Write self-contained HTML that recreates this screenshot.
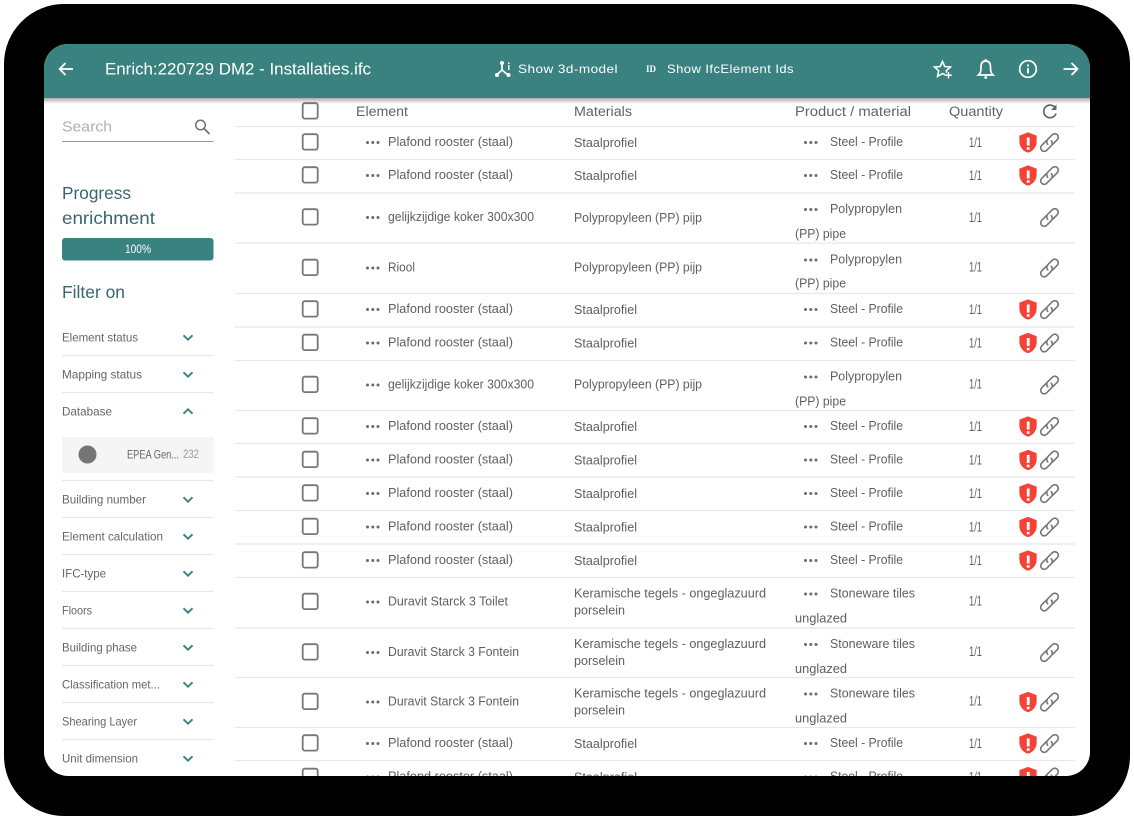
<!DOCTYPE html>
<html><head><meta charset="utf-8"><style>
html,body{margin:0;padding:0;background:#fff;width:1134px;height:820px;overflow:hidden}
svg{display:block}
text{font-family:"Liberation Sans",sans-serif}
.t{font-size:12.5px;fill:#5f5f5f}
text[x="969"]{font-size:13.5px}
.h{font-size:13.5px;fill:#626262}
.f{font-size:12px;fill:#666}
.w{fill:#fff}
.p{font-size:17.5px;fill:#36666f}
</style></head><body>
<svg width="1134" height="820" viewBox="0 0 1134 820" xmlns="http://www.w3.org/2000/svg">
<defs>
<clipPath id="scr"><rect x="44" y="44" width="1046" height="732" rx="24"/></clipPath>
<linearGradient id="sh" x1="0" y1="0" x2="0" y2="1"><stop offset="0" stop-color="#000" stop-opacity=".32"/><stop offset="1" stop-color="#000" stop-opacity="0"/></linearGradient>
<g id="cb"><rect x="302.700" y="-7.800" width="15" height="15.400" rx="2" fill="#fff" stroke="#777" stroke-width="1.800"/></g>
<g id="d1" fill="#6a6a6a"><circle cx="367.500" cy="0.500" r="1.500"/><circle cx="372.800" cy="0.500" r="1.500"/><circle cx="378" cy="0.500" r="1.500"/></g>
<g id="d2" fill="#6a6a6a"><circle cx="805.500" cy="0.500" r="1.500"/><circle cx="810.800" cy="0.500" r="1.500"/><circle cx="816" cy="0.500" r="1.500"/></g>
<g id="lk"><path transform="translate(1049.500,0.500) rotate(-45)" fill="none" stroke="#757575" stroke-width="1.600" stroke-linecap="round" d="M-1 -3.500H-7.500A3.500 3.500 0 0 0 -7.500 3.500H-1A3.500 3.500 0 0 0 2.500 0M1 3.500H7.500A3.500 3.500 0 0 0 7.500 -3.500H1A3.500 3.500 0 0 0 -2.500 0"/></g>
<g id="sd"><path transform="translate(1016.500,-10.500) scale(.96,.92)" fill="#f44336" d="M12 1L3 4.500v6.500c0 5.550 3.840 10.740 9 12 5.160-1.260 9-6.450 9-12V4.500l-9-3.500z"/><path fill="#fff" d="M1026.800 -4.500h2.800v8h-2.800zm0 9.700h2.800v2.600h-2.800z"/></g>
<path id="ch" d="M-4.500 -2.200L0 2.200L4.500 -2.200" fill="none" stroke="#3a8280" stroke-width="1.900"/>
</defs>

<rect width="1134" height="820" fill="#fff"/>
<rect x="4" y="4" width="1126" height="812" rx="60" fill="#000"/>
<g clip-path="url(#scr)">
<rect x="44" y="44" width="1046" height="732" fill="#fff"/>

<!-- table lines -->
<g stroke="#e8e8e8" stroke-width="1.200">
<path d="M235 126.500H1075M235 159.500H1075M235 193H1075M235 243H1075M235 293.500H1075M235 327H1075M235 360.500H1075M235 410.500H1075M235 443.500H1075M235 477H1075M235 510.500H1075M235 544H1075M235 577.500H1075M235 628H1075M235 677.500H1075M235 727.500H1075M235 760.500H1075"/>
</g>

<!-- table head -->
<use href="#cb" y="111"/>
<text class="h" x="356" y="116" textLength="52" lengthAdjust="spacingAndGlyphs">Element</text>
<text class="h" x="574" y="116" textLength="58" lengthAdjust="spacingAndGlyphs">Materials</text>
<text class="h" x="795" y="116" textLength="116" lengthAdjust="spacingAndGlyphs">Product / material</text>
<text class="h" x="949" y="116" textLength="54" lengthAdjust="spacingAndGlyphs">Quantity</text>
<path d="M1055 107.500A6.300 6.300 0 1 0 1056 113.500" fill="none" stroke="#666" stroke-width="1.700"/><path d="M1056.500 104.500V110H1051Z" fill="#666"/>

<!-- rows -->
<g transform="translate(0,142)"><use href="#cb"/><use href="#d1"/><text class="t" x="388" y="4" textLength="125" lengthAdjust="spacingAndGlyphs">Plafond rooster (staal)</text><text class="t" x="574" y="5" textLength="63" lengthAdjust="spacingAndGlyphs">Staalprofiel</text><use href="#d2"/><text class="t" x="830" y="4" textLength="73" lengthAdjust="spacingAndGlyphs">Steel - Profile</text><text class="t" x="969" y="5" textLength="13" lengthAdjust="spacingAndGlyphs">1/1</text><use href="#sd"/><use href="#lk"/></g>
<g transform="translate(0,175)"><use href="#cb"/><use href="#d1"/><text class="t" x="388" y="4" textLength="125" lengthAdjust="spacingAndGlyphs">Plafond rooster (staal)</text><text class="t" x="574" y="5" textLength="63" lengthAdjust="spacingAndGlyphs">Staalprofiel</text><use href="#d2"/><text class="t" x="830" y="4" textLength="73" lengthAdjust="spacingAndGlyphs">Steel - Profile</text><text class="t" x="969" y="5" textLength="13" lengthAdjust="spacingAndGlyphs">1/1</text><use href="#sd"/><use href="#lk"/></g>

<g transform="translate(0,217)"><use href="#cb"/><use href="#d1"/><text class="t" x="388" y="4" textLength="146" lengthAdjust="spacingAndGlyphs">gelijkzijdige koker 300x300</text><text class="t" x="574" y="5" textLength="128" lengthAdjust="spacingAndGlyphs">Polypropyleen (PP) pijp</text><use href="#d2" y="-8"/><text class="t" x="830" y="-4" textLength="72" lengthAdjust="spacingAndGlyphs">Polypropylen</text><text class="t" x="795" y="21" textLength="51" lengthAdjust="spacingAndGlyphs">(PP) pipe</text><text class="t" x="969" y="5" textLength="13" lengthAdjust="spacingAndGlyphs">1/1</text><use href="#lk"/></g>
<g transform="translate(0,267.500)"><use href="#cb"/><use href="#d1"/><text class="t" x="388" y="4" textLength="27" lengthAdjust="spacingAndGlyphs">Riool</text><text class="t" x="574" y="4" textLength="128" lengthAdjust="spacingAndGlyphs">Polypropyleen (PP) pijp</text><use href="#d2" y="-8"/><text class="t" x="830" y="-4" textLength="72" lengthAdjust="spacingAndGlyphs">Polypropylen</text><text class="t" x="795" y="20" textLength="51" lengthAdjust="spacingAndGlyphs">(PP) pipe</text><text class="t" x="969" y="4" textLength="13" lengthAdjust="spacingAndGlyphs">1/1</text><use href="#lk"/></g>

<g transform="translate(0,309)"><use href="#cb"/><use href="#d1"/><text class="t" x="388" y="4" textLength="125" lengthAdjust="spacingAndGlyphs">Plafond rooster (staal)</text><text class="t" x="574" y="5" textLength="63" lengthAdjust="spacingAndGlyphs">Staalprofiel</text><use href="#d2"/><text class="t" x="830" y="4" textLength="73" lengthAdjust="spacingAndGlyphs">Steel - Profile</text><text class="t" x="969" y="5" textLength="13" lengthAdjust="spacingAndGlyphs">1/1</text><use href="#sd"/><use href="#lk"/></g>
<g transform="translate(0,342.500)"><use href="#cb"/><use href="#d1"/><text class="t" x="388" y="4" textLength="125" lengthAdjust="spacingAndGlyphs">Plafond rooster (staal)</text><text class="t" x="574" y="5" textLength="63" lengthAdjust="spacingAndGlyphs">Staalprofiel</text><use href="#d2"/><text class="t" x="830" y="4" textLength="73" lengthAdjust="spacingAndGlyphs">Steel - Profile</text><text class="t" x="969" y="5" textLength="13" lengthAdjust="spacingAndGlyphs">1/1</text><use href="#sd"/><use href="#lk"/></g>

<g transform="translate(0,384.500)"><use href="#cb"/><use href="#d1"/><text class="t" x="388" y="4" textLength="146" lengthAdjust="spacingAndGlyphs">gelijkzijdige koker 300x300</text><text class="t" x="574" y="4" textLength="128" lengthAdjust="spacingAndGlyphs">Polypropyleen (PP) pijp</text><use href="#d2" y="-8"/><text class="t" x="830" y="-4" textLength="72" lengthAdjust="spacingAndGlyphs">Polypropylen</text><text class="t" x="795" y="21" textLength="51" lengthAdjust="spacingAndGlyphs">(PP) pipe</text><text class="t" x="969" y="4" textLength="13" lengthAdjust="spacingAndGlyphs">1/1</text><use href="#lk"/></g>

<g transform="translate(0,426)"><use href="#cb"/><use href="#d1"/><text class="t" x="388" y="4" textLength="125" lengthAdjust="spacingAndGlyphs">Plafond rooster (staal)</text><text class="t" x="574" y="5" textLength="63" lengthAdjust="spacingAndGlyphs">Staalprofiel</text><use href="#d2"/><text class="t" x="830" y="4" textLength="73" lengthAdjust="spacingAndGlyphs">Steel - Profile</text><text class="t" x="969" y="5" textLength="13" lengthAdjust="spacingAndGlyphs">1/1</text><use href="#sd"/><use href="#lk"/></g>
<g transform="translate(0,459.500)"><use href="#cb"/><use href="#d1"/><text class="t" x="388" y="4" textLength="125" lengthAdjust="spacingAndGlyphs">Plafond rooster (staal)</text><text class="t" x="574" y="5" textLength="63" lengthAdjust="spacingAndGlyphs">Staalprofiel</text><use href="#d2"/><text class="t" x="830" y="4" textLength="73" lengthAdjust="spacingAndGlyphs">Steel - Profile</text><text class="t" x="969" y="5" textLength="13" lengthAdjust="spacingAndGlyphs">1/1</text><use href="#sd"/><use href="#lk"/></g>
<g transform="translate(0,493)"><use href="#cb"/><use href="#d1"/><text class="t" x="388" y="4" textLength="125" lengthAdjust="spacingAndGlyphs">Plafond rooster (staal)</text><text class="t" x="574" y="5" textLength="63" lengthAdjust="spacingAndGlyphs">Staalprofiel</text><use href="#d2"/><text class="t" x="830" y="4" textLength="73" lengthAdjust="spacingAndGlyphs">Steel - Profile</text><text class="t" x="969" y="5" textLength="13" lengthAdjust="spacingAndGlyphs">1/1</text><use href="#sd"/><use href="#lk"/></g>
<g transform="translate(0,526.500)"><use href="#cb"/><use href="#d1"/><text class="t" x="388" y="4" textLength="125" lengthAdjust="spacingAndGlyphs">Plafond rooster (staal)</text><text class="t" x="574" y="5" textLength="63" lengthAdjust="spacingAndGlyphs">Staalprofiel</text><use href="#d2"/><text class="t" x="830" y="4" textLength="73" lengthAdjust="spacingAndGlyphs">Steel - Profile</text><text class="t" x="969" y="5" textLength="13" lengthAdjust="spacingAndGlyphs">1/1</text><use href="#sd"/><use href="#lk"/></g>
<g transform="translate(0,560)"><use href="#cb"/><use href="#d1"/><text class="t" x="388" y="4" textLength="125" lengthAdjust="spacingAndGlyphs">Plafond rooster (staal)</text><text class="t" x="574" y="5" textLength="63" lengthAdjust="spacingAndGlyphs">Staalprofiel</text><use href="#d2"/><text class="t" x="830" y="4" textLength="73" lengthAdjust="spacingAndGlyphs">Steel - Profile</text><text class="t" x="969" y="5" textLength="13" lengthAdjust="spacingAndGlyphs">1/1</text><use href="#sd"/><use href="#lk"/></g>

<g transform="translate(0,601.500)"><use href="#cb"/><use href="#d1"/><text class="t" x="388" y="4" textLength="120" lengthAdjust="spacingAndGlyphs">Duravit Starck 3 Toilet</text><text class="t" x="574" y="-4" textLength="192" lengthAdjust="spacingAndGlyphs">Keramische tegels - ongeglazuurd</text><text class="t" x="574" y="13" textLength="51" lengthAdjust="spacingAndGlyphs">porselein</text><use href="#d2" y="-8"/><text class="t" x="830" y="-4" textLength="85" lengthAdjust="spacingAndGlyphs">Stoneware tiles</text><text class="t" x="795" y="21" textLength="52" lengthAdjust="spacingAndGlyphs">unglazed</text><text class="t" x="969" y="4" textLength="13" lengthAdjust="spacingAndGlyphs">1/1</text><use href="#lk"/></g>
<g transform="translate(0,652)"><use href="#cb"/><use href="#d1"/><text class="t" x="388" y="4" textLength="131" lengthAdjust="spacingAndGlyphs">Duravit Starck 3 Fontein</text><text class="t" x="574" y="-4" textLength="192" lengthAdjust="spacingAndGlyphs">Keramische tegels - ongeglazuurd</text><text class="t" x="574" y="13" textLength="51" lengthAdjust="spacingAndGlyphs">porselein</text><use href="#d2" y="-8"/><text class="t" x="830" y="-4" textLength="85" lengthAdjust="spacingAndGlyphs">Stoneware tiles</text><text class="t" x="795" y="21" textLength="52" lengthAdjust="spacingAndGlyphs">unglazed</text><text class="t" x="969" y="4" textLength="13" lengthAdjust="spacingAndGlyphs">1/1</text><use href="#lk"/></g>
<g transform="translate(0,701.500)"><use href="#cb"/><use href="#d1"/><text class="t" x="388" y="4" textLength="131" lengthAdjust="spacingAndGlyphs">Duravit Starck 3 Fontein</text><text class="t" x="574" y="-4" textLength="192" lengthAdjust="spacingAndGlyphs">Keramische tegels - ongeglazuurd</text><text class="t" x="574" y="13" textLength="51" lengthAdjust="spacingAndGlyphs">porselein</text><use href="#d2" y="-8"/><text class="t" x="830" y="-4" textLength="85" lengthAdjust="spacingAndGlyphs">Stoneware tiles</text><text class="t" x="795" y="21" textLength="52" lengthAdjust="spacingAndGlyphs">unglazed</text><text class="t" x="969" y="4" textLength="13" lengthAdjust="spacingAndGlyphs">1/1</text><use href="#sd"/><use href="#lk"/></g>

<g transform="translate(0,743)"><use href="#cb"/><use href="#d1"/><text class="t" x="388" y="4" textLength="125" lengthAdjust="spacingAndGlyphs">Plafond rooster (staal)</text><text class="t" x="574" y="5" textLength="63" lengthAdjust="spacingAndGlyphs">Staalprofiel</text><use href="#d2"/><text class="t" x="830" y="4" textLength="73" lengthAdjust="spacingAndGlyphs">Steel - Profile</text><text class="t" x="969" y="5" textLength="13" lengthAdjust="spacingAndGlyphs">1/1</text><use href="#sd"/><use href="#lk"/></g>
<g transform="translate(0,776.500)"><use href="#cb"/><use href="#d1"/><text class="t" x="388" y="4" textLength="125" lengthAdjust="spacingAndGlyphs">Plafond rooster (staal)</text><text class="t" x="574" y="5" textLength="63" lengthAdjust="spacingAndGlyphs">Staalprofiel</text><use href="#d2"/><text class="t" x="830" y="4" textLength="73" lengthAdjust="spacingAndGlyphs">Steel - Profile</text><text class="t" x="969" y="5" textLength="13" lengthAdjust="spacingAndGlyphs">1/1</text><use href="#sd"/><use href="#lk"/></g>

<!-- sidebar -->
<text x="62" y="131.500" font-size="15" fill="#b0b0b0" textLength="50" lengthAdjust="spacingAndGlyphs">Search</text>
<circle cx="200.500" cy="125" r="4.800" fill="none" stroke="#707070" stroke-width="1.500"/><path d="M204 128.500L209.500 134" stroke="#707070" stroke-width="1.700"/>
<path d="M62 141.500H213.500" stroke="#9a9a9a" stroke-width="1.100"/>
<text class="p" x="62" y="199" textLength="69" lengthAdjust="spacingAndGlyphs">Progress</text>
<text class="p" x="62" y="224" textLength="93" lengthAdjust="spacingAndGlyphs">enrichment</text>
<rect x="62" y="238" width="151.500" height="22.500" rx="3" fill="#3a8280"/>
<text x="125" y="253" font-size="12" fill="#fff" textLength="26" lengthAdjust="spacingAndGlyphs">100%</text>
<text class="p" x="62" y="298" textLength="63" lengthAdjust="spacingAndGlyphs">Filter on</text>

<g stroke="#e8e8e8" stroke-width="1.200"><path d="M62 355.500H213.500M62 392.500H213.500M62 480.500H213.500M62 517.500H213.500M62 554.500H213.500M62 591.500H213.500M62 628.500H213.500M62 665.500H213.500M62 702.500H213.500M62 739.500H213.500"/></g>

<text class="f" x="62" y="341.500" textLength="76" lengthAdjust="spacingAndGlyphs">Element status</text><use href="#ch" x="188" y="337.500"/>
<text class="f" x="62" y="378.500" textLength="80" lengthAdjust="spacingAndGlyphs">Mapping status</text><use href="#ch" x="188" y="374.500"/>
<text class="f" x="62" y="415.500" textLength="50" lengthAdjust="spacingAndGlyphs">Database</text><path d="M183.500 413.700L188 409.300L192.500 413.700" fill="none" stroke="#3a8280" stroke-width="1.900"/>
<rect x="62" y="437" width="151.500" height="36" fill="#f5f5f5"/>
<circle cx="87.500" cy="454.500" r="9" fill="#757575"/>
<text class="f" x="127" y="458.500" textLength="52" lengthAdjust="spacingAndGlyphs">EPEA Gen...</text>
<text x="183" y="458" font-size="11.500" fill="#9a9a9a" textLength="16" lengthAdjust="spacingAndGlyphs">232</text>
<text class="f" x="62" y="503.500" textLength="84" lengthAdjust="spacingAndGlyphs">Building number</text><use href="#ch" x="188" y="499.500"/>
<text class="f" x="62" y="540.500" textLength="101" lengthAdjust="spacingAndGlyphs">Element calculation</text><use href="#ch" x="188" y="536.500"/>
<text class="f" x="62" y="577.500" textLength="44" lengthAdjust="spacingAndGlyphs">IFC-type</text><use href="#ch" x="188" y="573.500"/>
<text class="f" x="62" y="614.500" textLength="30" lengthAdjust="spacingAndGlyphs">Floors</text><use href="#ch" x="188" y="610.500"/>
<text class="f" x="62" y="651.500" textLength="75" lengthAdjust="spacingAndGlyphs">Building phase</text><use href="#ch" x="188" y="647.500"/>
<text class="f" x="62" y="688.500" textLength="98" lengthAdjust="spacingAndGlyphs">Classification met...</text><use href="#ch" x="188" y="684.500"/>
<text class="f" x="62" y="725.500" textLength="75" lengthAdjust="spacingAndGlyphs">Shearing Layer</text><use href="#ch" x="188" y="721.500"/>
<text class="f" x="62" y="762.500" textLength="76" lengthAdjust="spacingAndGlyphs">Unit dimension</text><use href="#ch" x="188" y="758.500"/>

<!-- header -->
<rect x="44" y="98" width="1046" height="6" fill="url(#sh)"/>
<rect x="44" y="44" width="1046" height="54" fill="#3a8280"/>
<path d="M73 69H60M65.500 63L59.700 69L65.500 75" fill="none" stroke="#fff" stroke-width="1.800"/>
<text class="w" x="105" y="74.500" font-size="16.500" textLength="266" lengthAdjust="spacingAndGlyphs">Enrich:220729 DM2 - Installaties.ifc</text>

<g fill="none" stroke="#fff" stroke-width="1.700"><path d="M502 63V70L496.500 75M502 70L508 75"/></g>
<g fill="#fff"><circle cx="502" cy="63" r="2"/><circle cx="497" cy="75" r="2"/><circle cx="508.500" cy="75" r="2"/><rect x="508" y="65" width="1.500" height="5"/><rect x="508" y="62.500" width="1.500" height="1.500"/></g>
<text class="w" x="518" y="73" font-size="12" style="letter-spacing:.4px" textLength="100" lengthAdjust="spacingAndGlyphs">Show 3d-model</text>
<text x="646" y="72" font-size="9" font-weight="bold" fill="#fff" style="font-family:'Liberation Serif',serif" textLength="10" lengthAdjust="spacingAndGlyphs">ID</text>
<text class="w" x="667" y="73" font-size="12" style="letter-spacing:.4px" textLength="127" lengthAdjust="spacingAndGlyphs">Show IfcElement Ids</text>

<path d="M942.500 61.500L944.700 66.500L950.500 67L946.200 70.700L947.300 76L942.500 73.500L937.500 76.500L938.700 70.800L934.500 67L940.200 66.500Z" fill="none" stroke="#fff" stroke-width="1.600"/>
<path d="M948.500 72V78.500M945.300 75.300H951.800" stroke="#3a8280" stroke-width="3.500"/>
<path d="M948.500 72V78.500M945.300 75.300H951.800" stroke="#fff" stroke-width="1.500"/>
<path d="M978.500 75C981 73 981 70 981 67C981 62.500 983 61 985.700 61C988.500 61 990.500 62.500 990.500 67C990.500 70 990.500 73 993 75Z" fill="none" stroke="#fff" stroke-width="1.700"/>
<circle cx="985.700" cy="60.500" r="1.400" fill="#fff"/><circle cx="985.700" cy="77.500" r="1.400" fill="#fff"/>
<circle cx="1028" cy="69" r="8.300" fill="none" stroke="#fff" stroke-width="1.700"/>
<rect x="1027.100" y="68" width="1.900" height="5.500" fill="#fff"/><rect x="1027.100" y="64.500" width="1.900" height="2" fill="#fff"/>
<path d="M1063.500 69H1077M1071.500 63L1077.500 69L1071.500 75" fill="none" stroke="#fff" stroke-width="1.800"/>
</g>
</svg>
</body></html>
